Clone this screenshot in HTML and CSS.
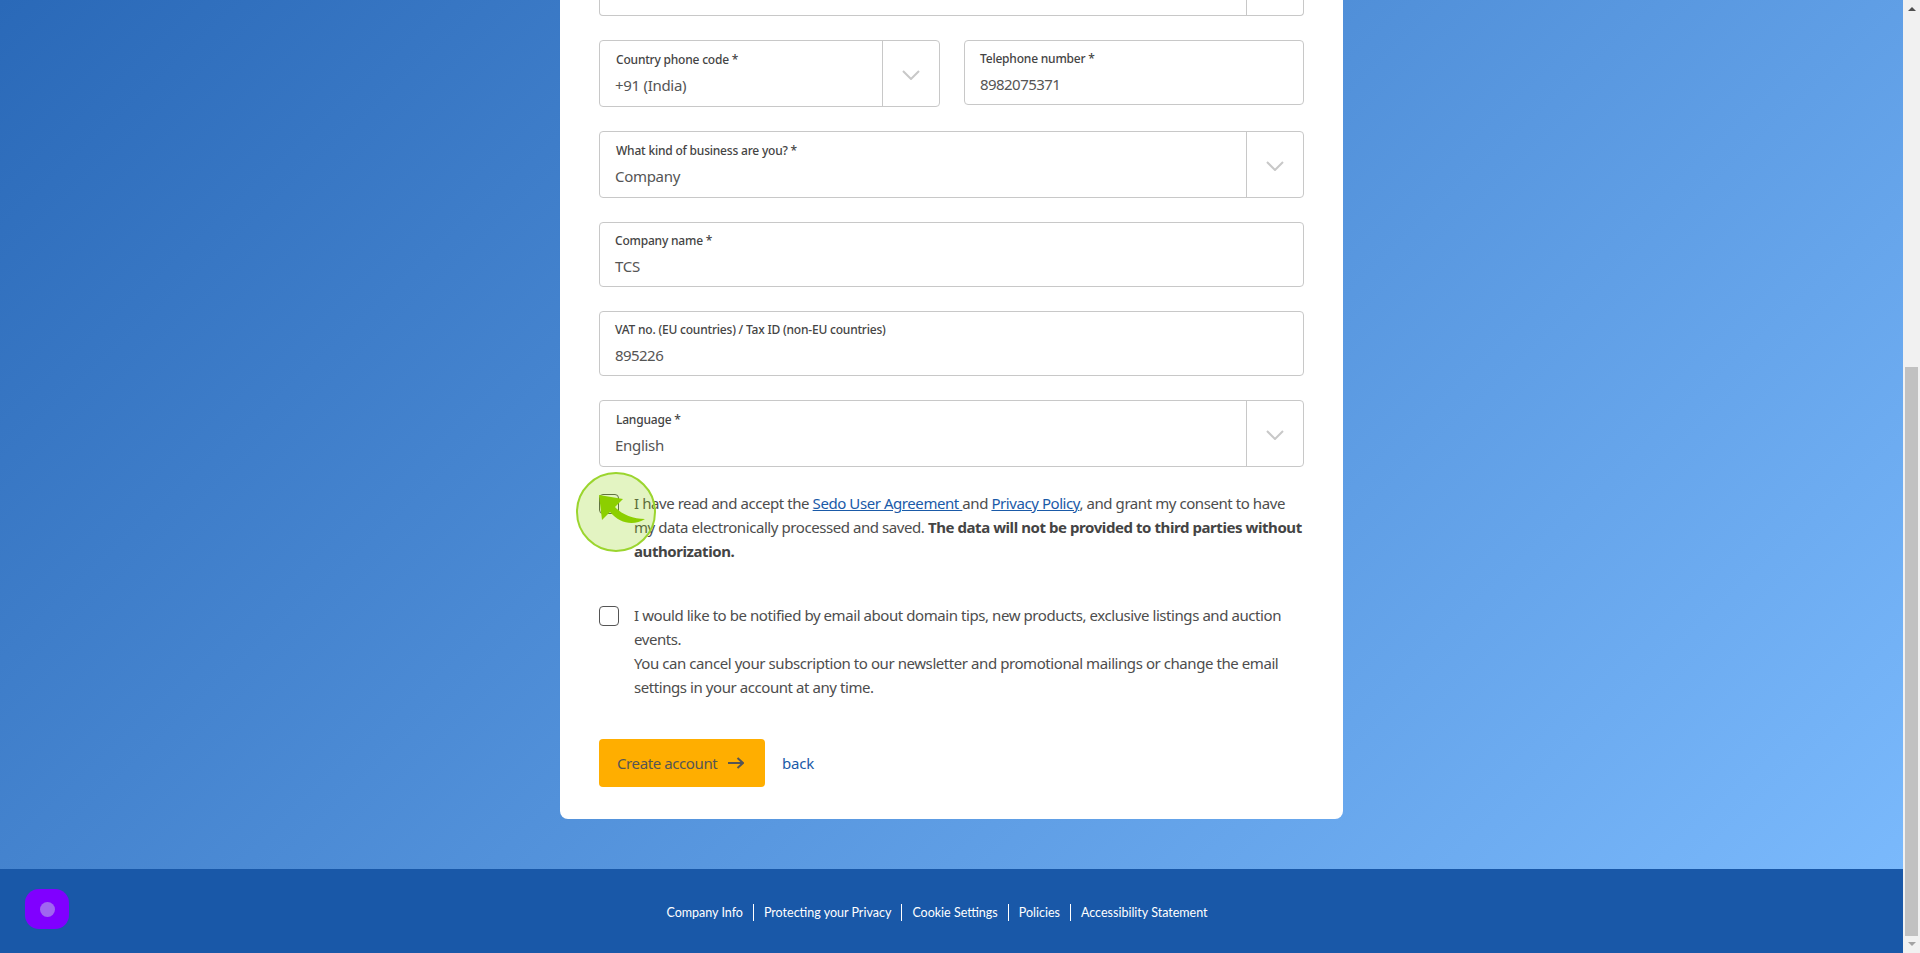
FILE: index.html
```html
<!DOCTYPE html>
<html lang="en">
<head>
    <meta charset="UTF-8">
    <meta name="viewport" content="width=device-width, initial-scale=1.0">
    <title>Create account</title>
    <link rel="stylesheet" href="styles.css">
</head>
<body>
    <div class="window">
        <div class="page">
            <main class="main">
                <form class="card">
                    <!-- field scrolled off the top -->
                    <div class="field field-select field-cut">
                        <div class="field-body"></div>
                        <div class="field-arrow"></div>
                    </div>

                    <div class="row">
                        <div class="field field-select field-phone">
                            <div class="field-body">
                                <label class="field-label">Country phone code *</label>
                                <div class="field-value">+91 (India)</div>
                            </div>
                            <div class="field-arrow">
                                <svg width="18" height="10" viewBox="0 0 18 10"><path d="M1 1l8 8 8-8" fill="none" stroke="#c8c8c8" stroke-width="2"/></svg>
                            </div>
                        </div>
                        <div class="field field-text field-tel">
                            <div class="field-body">
                                <label class="field-label">Telephone number *</label>
                                <div class="field-value field-digits">8982075371</div>
                            </div>
                        </div>
                    </div>

                    <div class="field field-select">
                        <div class="field-body">
                            <label class="field-label">What kind of business are you? *</label>
                            <div class="field-value">Company</div>
                        </div>
                        <div class="field-arrow">
                            <svg width="18" height="10" viewBox="0 0 18 10"><path d="M1 1l8 8 8-8" fill="none" stroke="#c8c8c8" stroke-width="2"/></svg>
                        </div>
                    </div>

                    <div class="field field-text">
                        <div class="field-body">
                            <label class="field-label">Company name *</label>
                            <div class="field-value">TCS</div>
                        </div>
                    </div>

                    <div class="field field-text">
                        <div class="field-body">
                            <label class="field-label">VAT no. (EU countries) / Tax ID (non-EU countries)</label>
                            <div class="field-value field-digits">895226</div>
                        </div>
                    </div>

                    <div class="field field-select">
                        <div class="field-body">
                            <label class="field-label">Language *</label>
                            <div class="field-value">English</div>
                        </div>
                        <div class="field-arrow">
                            <svg width="18" height="10" viewBox="0 0 18 10"><path d="M1 1l8 8 8-8" fill="none" stroke="#c8c8c8" stroke-width="2"/></svg>
                        </div>
                    </div>

                    <div class="check check-terms">
                        <span class="check-box"></span>
                        <p>I have read and accept the <a href="#">Sedo User Agreement </a>and <a href="#">Privacy Policy</a>, and grant my consent to have my data electronically processed and saved. <b>The data will not be provided to third parties without authorization.</b></p>
                        <!-- tutorial highlight over the checkbox -->
                        <div class="hint">
                            <svg width="80" height="80" viewBox="0 0 80 80"><path d="M23 23L47 27 39 35C45 42 57 47 69 47 58 54 44 52 34 40L26 48z" fill="#8ccf00"/></svg>
                        </div>
                    </div>

                    <div class="check check-news">
                        <span class="check-box"></span>
                        <p>I would like to be notified by email about domain tips, new products, exclusive listings and auction events.<br>You can cancel your subscription to our newsletter and promotional mailings or change the email settings in your account at any time.</p>
                    </div>

                    <div class="actions">
                        <button type="button" class="btn">Create account
                            <svg width="16" height="12" viewBox="0 0 16 12"><path d="M0 6h15M9.5 1L15 6l-5.500 5" fill="none" stroke="#555" stroke-width="2"/></svg>
                        </button>
                        <a class="back" href="#">back</a>
                    </div>
                </form>
            </main>
            <footer class="footer">
                <div class="chat-btn"><span></span></div>
                <nav class="footer-links">
                    <a href="#">Company Info</a>
                    <a href="#">Protecting your Privacy</a>
                    <a href="#">Cookie Settings</a>
                    <a href="#">Policies</a>
                    <a href="#">Accessibility Statement</a>
                </nav>
            </footer>
        </div>
        <div class="scrollbar">
            <div class="scroll-up"></div>
            <div class="scroll-track"><div class="scroll-thumb"></div></div>
            <div class="scroll-down"></div>
        </div>
    </div>
</body>
</html>
```

FILE: styles.css
```css
* {
    box-sizing: border-box;
}
html, body {
    margin: 0;
    height: 953px;
    overflow: hidden;
}
body {
    font-family: "Noto Sans", Arial, sans-serif;
    color: #4a4a4a;
}
.window {
    display: flex;
    height: 953px;
}
.page {
    flex: 1;
    display: flex;
    flex-direction: column;
    min-width: 0;
}
.main {
    height: 869px;
    background: linear-gradient(137deg, #2a69b8 0%, #7ab9fc 100%);
}
.card {
    width: 783px;
    height: 819px;
    margin-left: 560px;
    padding: 0 39px;
    background: #fff;
    border-radius: 0 0 8px 8px;
}

/* fields */
.field {
    display: flex;
    background: #fff;
    border: 1px solid #c8c8c8;
    border-radius: 4px;
    margin-bottom: 24px;
    height: 65px;
}
.field-select {
    height: 67px;
}
.field-cut {
    height: 16px;
    border-top: none;
    border-radius: 0 0 4px 4px;
}
.field-body {
    flex: 1;
    min-width: 0;
    padding: 9px 15px 0;
}
.field-select .field-body {
    padding-top: 10px;
}
.field-select .field-label {
    padding-left: 1px;
}
.field-arrow {
    width: 57px;
    padding-top: 2px;
    border-left: 1px solid #c8c8c8;
    display: flex;
    align-items: center;
    justify-content: center;
}
.field-label {
    display: block;
    font-size: 12px;
    line-height: 18px;
    font-weight: 500;
    letter-spacing: -0.2px;
    color: #444;
}
.field-value {
    font-size: 15px;
    line-height: 22px;
    margin-top: 5px;
    letter-spacing: -0.3px;
    color: #555;
}
.field-digits {
    letter-spacing: -0.55px;
}
.row {
    display: flex;
    justify-content: space-between;
}
.field-phone {
    width: 341px;
}
.field-tel {
    width: 340px;
}

/* checkboxes */
.check {
    position: relative;
    display: flex;
    gap: 15px;
    font-size: 15px;
    line-height: 24px;
    letter-spacing: -0.43px;
    color: #4d4d4d;
}
.check p {
    margin: 0;
    flex: 1;
}
.check a {
    color: #1a5aa8;
}
.check b {
    color: #444;
}
.check-box {
    flex: none;
    width: 20px;
    height: 20px;
    margin-top: 3px;
    border: 1px solid #555;
    border-radius: 4px;
    background: #fff;
}
.check-terms {
    margin-top: 24px;
}
.check-news {
    margin-top: 40px;
}
.hint {
    position: absolute;
    left: -23px;
    top: -19px;
    width: 80px;
    height: 80px;
    border: 2px solid #9bd52e;
    border-radius: 50%;
    background: rgba(140, 207, 0, 0.24);
    display: flex;
    align-items: center;
    justify-content: center;
}
.hint svg {
    flex: none;
}

/* buttons */
.actions {
    display: flex;
    align-items: center;
    gap: 17px;
    margin-top: 40px;
}
.btn {
    display: flex;
    align-items: center;
    gap: 11px;
    width: 166px;
    height: 48px;
    padding: 0 18px;
    font-family: inherit;
    font-size: 15px;
    letter-spacing: -0.4px;
    white-space: nowrap;
    color: #555;
    background: #ffae00;
    border: none;
    border-radius: 4px;
}
.back {
    font-size: 15px;
    letter-spacing: -0.2px;
    color: #1a5aa8;
    text-decoration: none;
}

/* footer */
.footer {
    position: relative;
    height: 84px;
    background: #1958a8;
    display: flex;
    justify-content: center;
    padding-top: 35px;
}
.chat-btn {
    position: absolute;
    left: 25px;
    top: 20px;
    width: 44px;
    height: 40px;
    border-radius: 14px;
    background: #8000ff;
    display: flex;
    align-items: center;
    justify-content: center;
}
.chat-btn span {
    width: 15px;
    height: 15px;
    border-radius: 50%;
    background: #a066f0;
}
.footer-links {
    display: flex;
    height: 17px;
    margin-right: 29px;
}
.footer-links a {
    font-family: Lato, Arial, sans-serif;
    font-size: 12.5px;
    line-height: 17px;
    color: #fff;
    text-decoration: none;
    padding: 0 10px;
    border-left: 1px solid #fff;
}
.footer-links a:first-child {
    border-left: none;
}

/* scrollbar */
.scrollbar {
    width: 17px;
    background: #f1f1f1;
    display: flex;
    flex-direction: column;
}
.scroll-up, .scroll-down {
    height: 0;
    width: 0;
    margin: 0 auto;
    border-left: 4px solid transparent;
    border-right: 4px solid transparent;
}
.scroll-up {
    margin-top: 7px;
    margin-bottom: 6px;
    border-bottom: 4px solid #505050;
}
.scroll-down {
    margin-top: 6px;
    margin-bottom: 7px;
    border-top: 4px solid #a3a3a3;
}
.scroll-track {
    flex: 1;
    display: flex;
    padding: 350px 2px 0;
}
.scroll-thumb {
    flex: 1;
    background: #c1c1c1;
}
```
